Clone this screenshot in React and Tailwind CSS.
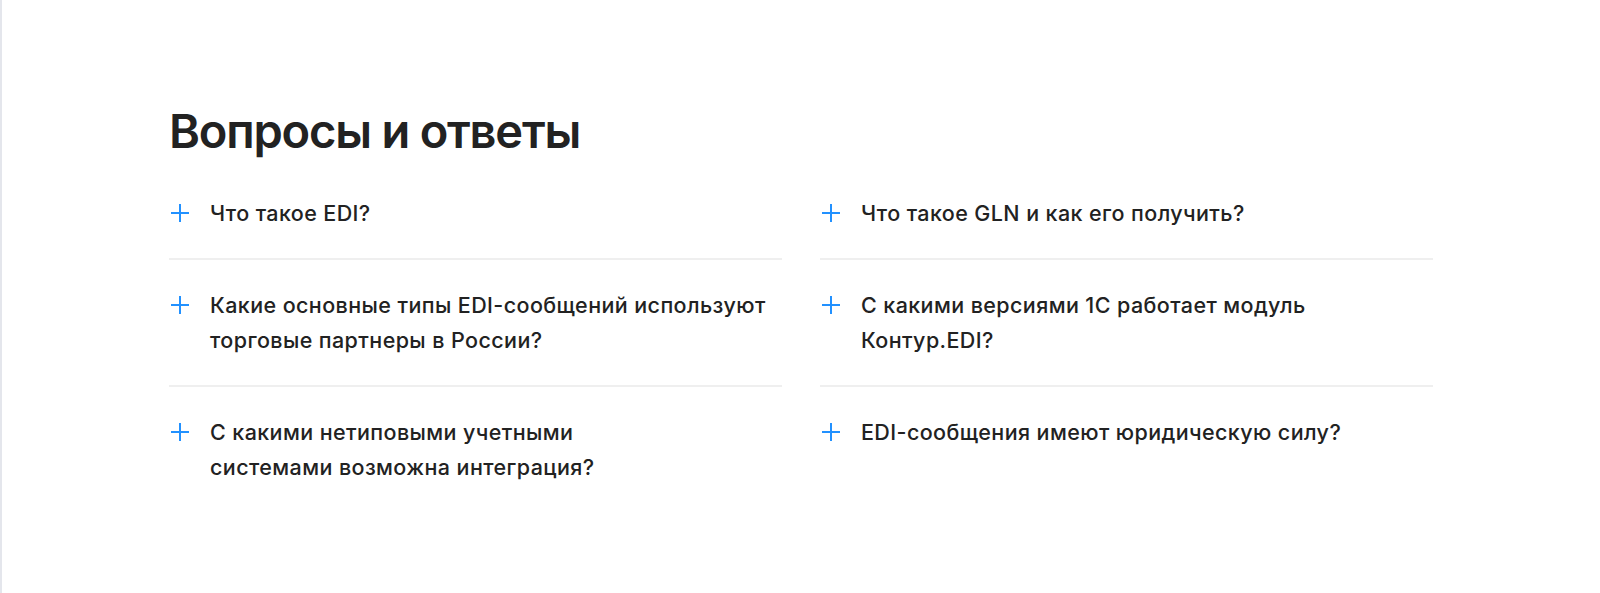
import React from 'react';

const questions = [
    ['Что такое EDI?', 'Что такое GLN и как его получить?'],
    [
        <>Какие основные типы EDI-сообщений используют<br />торговые партнеры в России?</>,
        <>С какими версиями 1С работает модуль<br />Контур.EDI?</>,
    ],
    [
        <>С какими нетиповыми учетными<br />системами возможна интеграция?</>,
        'EDI-сообщения имеют юридическую силу?',
    ],
];

const Plus = () => (
    <svg width="18" height="18" viewBox="0 0 18 18" className="shrink-0 mt-[8px]">
        <path d="M9 0v18M0 9h18" stroke="#2291ff" strokeWidth="2" />
    </svg>
);

const Question = ({ children, last }) => (
    <div className={`flex gap-[21px] pl-[2px] pt-[28px] pb-[27px] ${last ? '' : 'border-b-2 border-[#efefef]'}`}>
        <Plus />
        <div className="text-[21.5px] leading-[35px] font-medium tracking-[0.4px] text-[#222]">{children}</div>
    </div>
);

const App = () => {
    const left = questions.map((row) => row[0]);
    const right = questions.map((row) => row[1]);

    return (
        <div className="h-[593px] bg-white border-l-2 border-[#e4e6ec] font-['Inter','Noto_Sans',sans-serif]">
            <div className="w-[1264px] mx-auto pt-[103px]">
                <h2 className="text-[47px] leading-[56px] font-semibold text-[#222] tracking-[-1.2px] mb-[9px]">
                    Вопросы и ответы
                </h2>

                {/* two columns of collapsed questions */}
                <div className="grid grid-cols-2 gap-x-[38px]">
                    {[left, right].map((col, ci) => (
                        <div key={ci}>
                            {col.map((q, i) => (
                                <Question key={i} last={i === col.length - 1}>
                                    {q}
                                </Question>
                            ))}
                        </div>
                    ))}
                </div>
            </div>
        </div>
    );
};

export default App;
